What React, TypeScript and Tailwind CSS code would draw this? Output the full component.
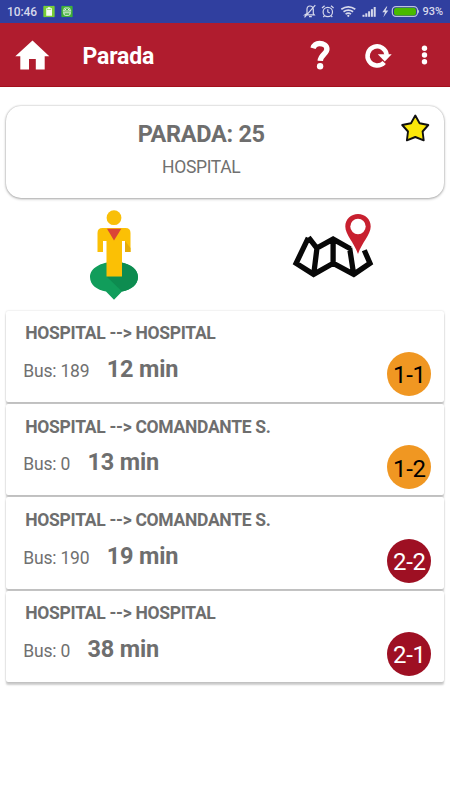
import React from "react";

type Arrival = {
  route: string;
  bus: string;
  wait: string;
  line: string;
  badge: string;
};

const ORANGE = "bg-[#f09722] text-black";
const RED = "bg-[#9e1023] text-white";

const arrivals: Arrival[] = [
  { route: "HOSPITAL --> HOSPITAL", bus: "189", wait: "12 min", line: "1-1", badge: ORANGE },
  { route: "HOSPITAL --> COMANDANTE S.", bus: "0", wait: "13 min", line: "1-2", badge: ORANGE },
  { route: "HOSPITAL --> COMANDANTE S.", bus: "190", wait: "19 min", line: "2-2", badge: RED },
  { route: "HOSPITAL --> HOSPITAL", bus: "0", wait: "38 min", line: "2-1", badge: RED },
];

function StatusBar() {
  return (
    <div className="flex h-[23px] items-center bg-[#303f9f] pl-[7px] text-[#d6d9ec]">
      <span className="w-[35px] pt-px text-[12px] leading-none font-medium tracking-[-0.1px] whitespace-nowrap">10:46</span>
      <svg className="h-[23px] w-[34px]" viewBox="0 0 34 23">
        <rect x="0.8" y="5.3" width="12.4" height="12.4" rx="1.5" fill="#78cd36" stroke="#2636b8" />
        <path d="M5.8 7.300h2.600v1H10v7.400H4.200V8.300h1.600z" fill="#f4fbef" />
        <rect x="5" y="9" width="4.200" height="1" fill="#a9df80" />
        <rect x="18.800" y="5.300" width="12.400" height="12.400" rx="1.500" fill="#3fae38" stroke="#2636b8" />
        <g fill="none" stroke="#e4f4e2" strokeWidth="1">
          <path d="M22 11V9.200q0-1.200 1.200-1.200h3.600q1.200 0 1.200 1.200V11M22 13v1q0 1.300 1.300 1.300h3.400q1.300 0 1.300-1.300v-1M20.800 11h8.400M21 12.800h8" />
          <path d="M23 9.500h1M26 9.500h1" />
        </g>
      </svg>
      <svg className="ml-auto h-[23px] w-[122px]" viewBox="0 0 122 23">
        <g fill="none" stroke="#d6d9ec" strokeWidth="1.200">
          <path d="M6 14.500V9.200Q6 6 9 6T12.300 9.200v4.300l1 1.300H4l2-1.300M8 16.700h2.800M3.500 17.300 14.300 5.200" />
          <circle cx="26.800" cy="12" r="4.700" />
          <path d="M26.800 9.300V12l2 1M21 8l2.600-2.300M30 5.700 32.600 8M23.600 15.600 22.300 17M30 15.600 31.300 17" />
        </g>
        <g fill="none" stroke="#d6d9ec" strokeWidth="1.700">
          <path d="M40.300 9.300q7-5 14 0M42.500 11.800q4.800-3.300 9.600 0M44.600 14.100q2.700-1.800 5.400 0" />
        </g>
        <circle cx="47.300" cy="15.800" r="1.100" fill="#d6d9ec" />
        <g fill="#d6d9ec">
          <rect x="61.500" y="14.800" width="2" height="2" />
          <rect x="64.300" y="13.300" width="2" height="3.500" />
          <rect x="67.100" y="11.300" width="2" height="5.500" />
          <rect x="69.900" y="9.200" width="2" height="7.600" />
          <rect x="72.700" y="7" width="2" height="9.800" />
          <path d="M85.500 6.500 81.300 12.300h2.700L82.300 17.300l5-6.700h-2.700l1.700-4.100z" />
        </g>
        <rect x="91.300" y="6.600" width="25.200" height="9.800" rx="3.600" fill="#29339a" stroke="#bcc2e0" strokeWidth="1.200" />
        <path d="M117 9.500q2.200 2 0 4" fill="#bcc2e0" />
        <rect x="93" y="7.800" width="22" height="7.600" rx="2.700" fill="#48b900" />
      </svg>
      <span className="w-[27.500px] text-[11px] leading-none font-medium whitespace-nowrap">93%</span>
    </div>
  );
}

function Header() {
  return (
    <header className="flex h-16 items-center border-b border-[#a3101c] bg-[#b01c2e]">
      <svg className="h-16 w-[82px] shrink-0" viewBox="0 0 82 64">
        <path d="M32.500 17.500 15.300 33.200H20.300V46.500H29V36H35.800V46.500H44.700V33.200H49.300z" fill="#fff" />
      </svg>
      <h1 className="mt-1 ml-[0.500px] text-[23px] leading-none font-bold tracking-[-0.150px] text-white">Parada</h1>
      <svg className="ml-auto h-16 w-[155px] shrink-0" viewBox="0 0 155 64">
        <path d="M18 25.300Q19.500 20.500 24.500 20.500C28.500 20.500 31.900 22.300 31.900 26C31.900 31 25.600 31.500 25.300 37.800" fill="none" stroke="#fff" strokeWidth="5.400" />
        <circle cx="25.100" cy="43.200" r="3.200" fill="#fff" />
        <path d="M91.700 32A9.600 9.600 0 1 0 89.200 39.500" fill="none" stroke="#fff" strokeWidth="4.500" />
        <path d="M82.800 31.300H96.700L89.800 38.600z" fill="#fff" />
        <g fill="#fff">
          <circle cx="129.500" cy="25.300" r="2.700" />
          <circle cx="129.500" cy="32" r="2.700" />
          <circle cx="129.500" cy="38.700" r="2.700" />
        </g>
      </svg>
    </header>
  );
}

function StopCard() {
  return (
    <section className="relative mx-1.5 mt-[18.500px] flex h-[92px] flex-col items-center rounded-[15px] bg-white pr-[48px] shadow-[0_0_2px_rgba(0,0,0,0.250),0_1px_3px_rgba(0,0,0,0.300)]">
      <h2 className="mt-[14.500px] ml-[0.500px] text-[23.500px] leading-[28px] font-bold tracking-[-0.300px] whitespace-nowrap text-[#6e6e6e]">PARADA: 25</h2>
      <p className="mt-[8.500px] ml-[0.500px] text-[17.500px] leading-5 tracking-[-0.350px] whitespace-nowrap text-[#707070]">HOSPITAL</p>
      <svg className="absolute top-[7.500px] right-[14px] h-[32px] w-[30px]" viewBox="0 0 30 32">
        <path d="M15.300 2.500 19.600 10.200 28.300 12 22.600 18.500 23.700 27.300 15.300 24 6.900 27.300 8 18.500 2.200 12 11 10.200z" fill="#fbe80a" stroke="#111" strokeWidth="1.900" strokeLinejoin="round" />
      </svg>
    </section>
  );
}

function StreetViewIcon() {
  return (
    <svg className="h-[110px] w-[80px]" viewBox="0 0 80 110">
      <path d="M39 62C52 62 63 68 63 77C63 85 56 90 47 91.500L39 99.700 31 91.500C22 90 15 85 15 77C15 68 26 62 39 62z" fill="#119d5b" />
      <path d="M46.500 62.600C56 64.300 63 69.500 63 77C63 84 56 90 47 91.500L31.500 76.500h15z" fill="#0d8c50" />
      <circle cx="39" cy="17.700" r="7.400" fill="#f9bf08" />
      <path d="M27.500 28H50.500Q55.500 28 55.500 33V52H50V41H47V76.500H31.500V41H28V52H22.500V33Q22.500 28 27.500 28z" fill="#fbc005" />
      <path d="M50 41 55.500 48v4H50z" fill="#e4ab08" />
      <path d="M32 28.800H46.300L39 40.500z" fill="#db4437" />
    </svg>
  );
}

function MapIcon() {
  return (
    <svg className="h-[80px] w-[110px]" viewBox="0 0 110 80">
      <path d="M28 32 15.800 57.500 33.300 68.500 53 57.500 73.500 68.500 89.700 57.500 84 44.500M28.200 31.500 36.500 42.300 52.800 33.300 70 43M36.700 42 33.500 68M52.800 34V57M69.300 42 73.300 68" transform="translate(0.300 0.800)" fill="none" stroke="#080808" strokeWidth="5.300" />
      <path d="M78 9C71 9 65.300 14 65.300 21.500C65.300 29.500 74 37.500 78 49C82 37.500 90.700 29.500 90.700 21.500C90.700 14 85 9 78 9z" fill="#c8202f" />
      <circle cx="78" cy="21.500" r="7.700" fill="#fff" />
    </svg>
  );
}

function ArrivalCard({ route, bus, wait, line, badge }: Arrival) {
  return (
    <li className="flex h-[91.330px] justify-between rounded-[2px] bg-white pr-[12.700px] shadow-[0_0_2px_rgba(0,0,0,0.180),0_3px_2px_rgba(0,0,0,0.200)]">
      <div>
        <h3 className="mt-[12.700px] ml-[19.300px] text-[17.500px] leading-5 font-bold tracking-[-0.300px] whitespace-nowrap text-[#6e6e6e]">{route}</h3>
        <div className="mt-[11.500px] ml-[17.300px] flex items-baseline whitespace-nowrap">
          <span className="text-[17.500px] leading-7 tracking-[-0.200px] text-[#707070]">Bus: {bus}</span>
          <span className="ml-[17.300px] text-[23.500px] leading-7 font-bold tracking-[-0.150px] text-[#6e6e6e]">{wait}</span>
        </div>
      </div>
      <span className={`mt-[41.300px] flex size-[44px] items-center justify-center rounded-full pt-[3px] text-[24px] leading-none tracking-[-0.300px] ${badge}`}>
        {line}
      </span>
    </li>
  );
}

export default function App() {
  return (
    <main className="h-[800px] w-[450px] overflow-hidden bg-white font-['Roboto',sans-serif]">
      <StatusBar />
      <Header />
      <StopCard />
      <div className="mt-[2.500px] flex h-[110px] justify-between pr-[60px] pl-[75px]">
        <StreetViewIcon />
        <div className="pt-[5px]">
          <MapIcon />
        </div>
      </div>
      <ul className="mx-1.5 mt-[0.700px] flex flex-col gap-[2px]">
        {arrivals.map((arrival) => (
          <ArrivalCard key={arrival.line} {...arrival} />
        ))}
      </ul>
    </main>
  );
}
